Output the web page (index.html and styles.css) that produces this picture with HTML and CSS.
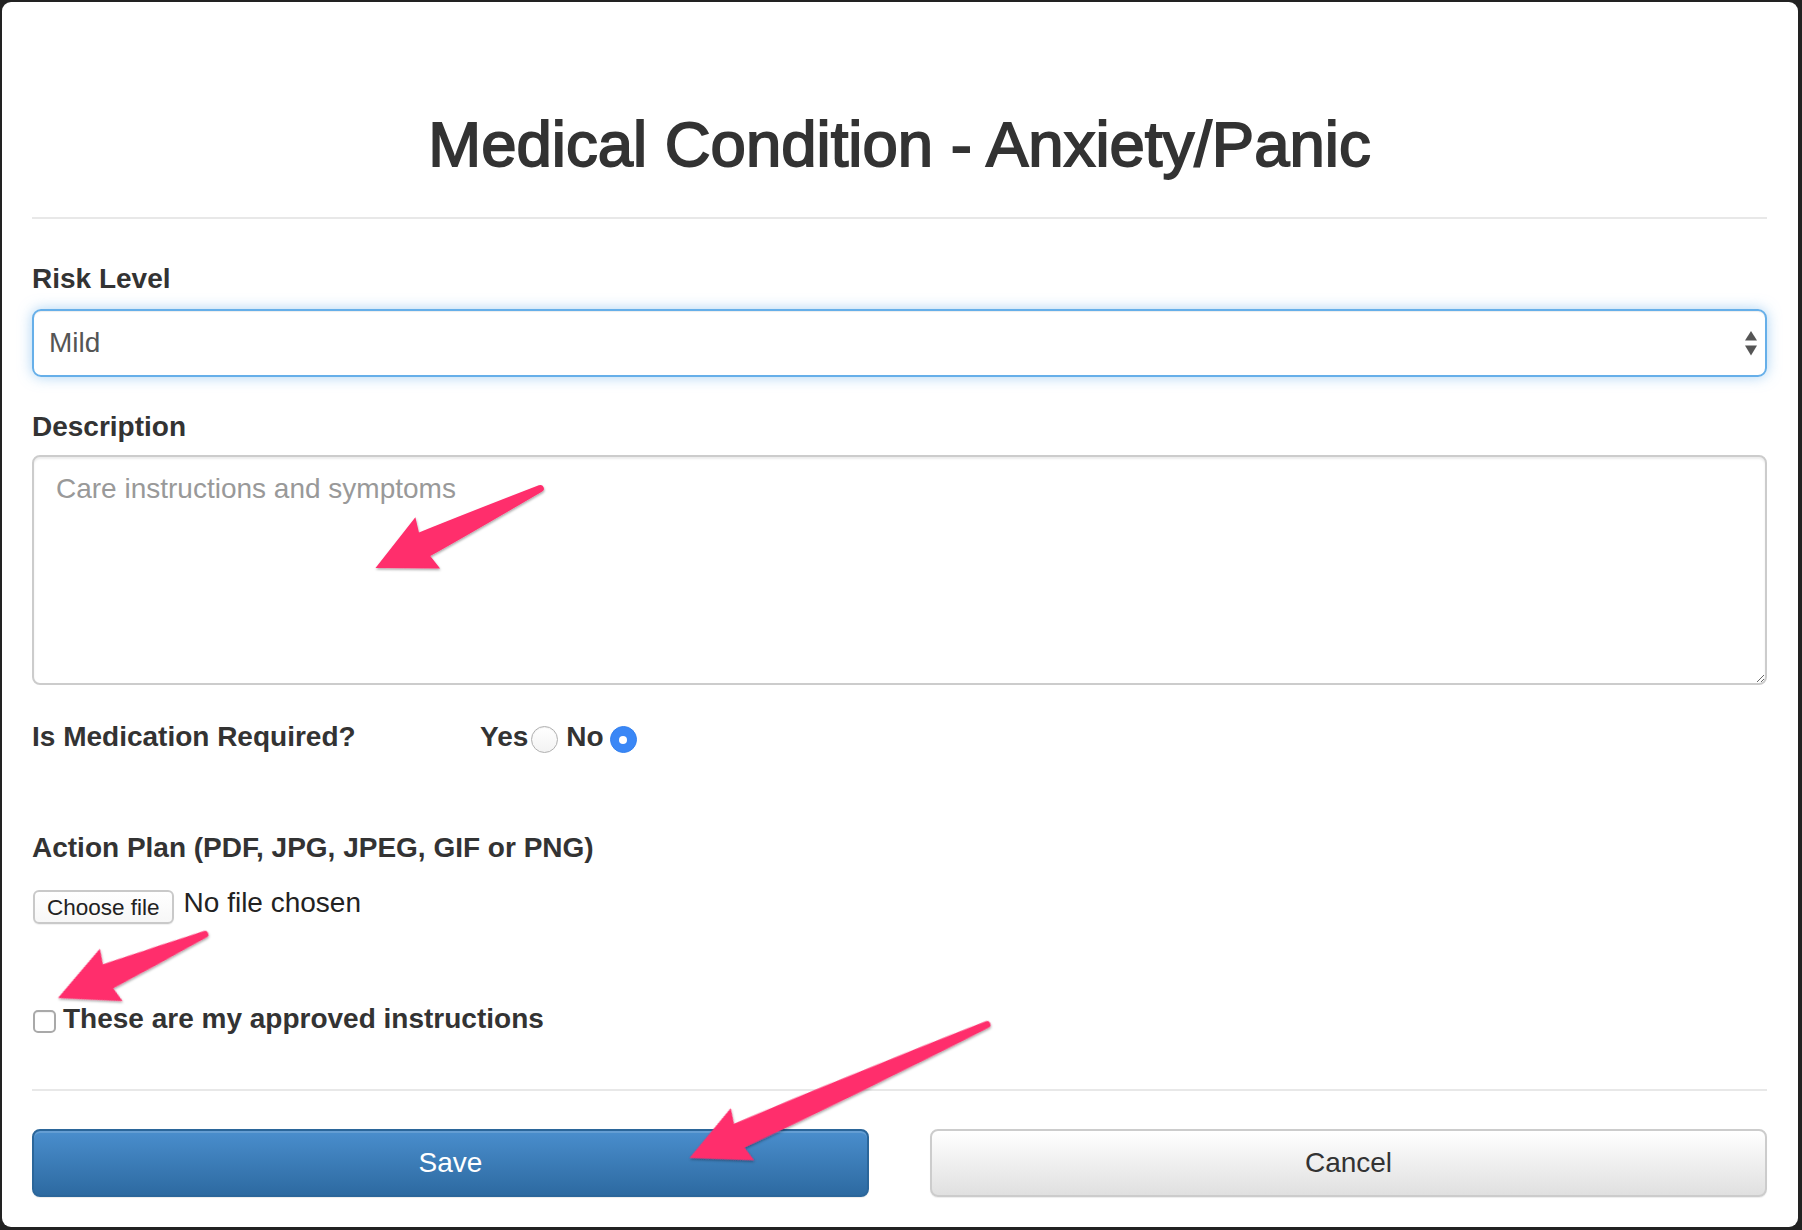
FILE: index.html
```html
<!DOCTYPE html>
<html lang="en">
<head>
<meta charset="utf-8">
<title>Medical Condition - Anxiety/Panic</title>
<link rel="stylesheet" href="styles.css">
</head>
<body>
<div class="modal">
  <h1 class="title">Medical Condition - Anxiety/Panic</h1>
  <hr class="rule rule-top">

  <label class="label label-risk">Risk Level</label>
  <div class="select">
    <span class="select-value">Mild</span>
    <svg class="select-arrows" width="12" height="25" viewBox="0 0 12 25">
      <polygon points="6,0 12,9.5 0,9.5" fill="#555"/>
      <polygon points="0,14.5 12,14.5 6,24.5" fill="#555"/>
    </svg>
  </div>

  <label class="label label-desc">Description</label>
  <textarea class="textarea" placeholder="Care instructions and symptoms"></textarea>

  <div class="radio-row">
    <span class="label label-med">Is Medication Required?</span>
    <span class="label opt-yes">Yes</span>
    <span class="radio radio-off"></span>
    <span class="label opt-no">No</span>
    <span class="radio radio-on"><span class="radio-dot"></span></span>
  </div>

  <label class="label label-plan">Action Plan (PDF, JPG, JPEG, GIF or PNG)</label>
  <div class="file-row">
    <span class="file-btn">Choose file</span>
    <span class="file-name">No file chosen</span>
  </div>

  <div class="check-row">
    <span class="checkbox"></span>
    <span class="label check-label">These are my approved instructions</span>
  </div>

  <hr class="rule rule-bottom">

  <div class="actions">
    <button class="btn btn-primary" type="button">Save</button>
    <button class="btn btn-default" type="button">Cancel</button>
  </div>
</div>

<svg class="arrows" width="1802" height="1230" viewBox="0 0 1802 1230">
  <defs>
    <filter id="shadow" x="-20%" y="-40%" width="140%" height="180%">
      <feDropShadow dx="0.5" dy="1.5" stdDeviation="1.2" flood-color="#000" flood-opacity="0.35"/>
    </filter>
  </defs>
  <g fill="#ff2d6c" filter="url(#shadow)">
    <path transform="translate(375.5 568) rotate(-25.74)"
          d="M0,0 L58,-28.5 L54.5,-13 Q102,-10 183,-3.5 A3.5,3.5 0 0 1 183,3.5 Q102,10 54.5,13 L58,28.5 Z"/>
    <path transform="translate(58 998) rotate(-23.43)"
          d="M0,0 L58,-28.5 L54.5,-13 Q90,-10 160,-3.5 A3.5,3.5 0 0 1 160,3.5 Q90,10 54.5,13 L58,28.5 Z"/>
    <path transform="translate(689.5 1158) rotate(-24.16)"
          d="M0,0 L58,-28.5 L54.5,-13 Q180,-10.5 326,-3.5 A3.5,3.5 0 0 1 326,3.5 Q180,10.5 54.5,13 L58,28.5 Z"/>
  </g>
</svg>
</body>
</html>
```

FILE: styles.css
```css
html, body {
  margin: 0;
  padding: 0;
}

body {
  width: 1802px;
  height: 1230px;
  background: #222222;
  font-family: "Liberation Sans", Arial, sans-serif;
  color: #333333;
  position: relative;
  overflow: hidden;
}

.modal {
  box-sizing: border-box;
  width: 1796px;
  margin: 0 0 0 2px;
  position: relative;
  top: 2px;
  padding: 111px 31px 30px 30px;
  background: #ffffff;
  border-radius: 9px;
}

.title {
  margin: 0;
  font-size: 63.5px;
  line-height: 63px;
  font-weight: 400;
  text-align: center;
  color: #333333;
  -webkit-text-stroke: 1.8px #333333;
}

.rule {
  border: 0;
  height: 2px;
  background: #e8e8e8;
  margin: 0;
}

.rule-top {
  margin-top: 41px;
}

.rule-bottom {
  margin-top: 56px;
}

.label {
  display: block;
  font-size: 28px;
  line-height: 28px;
  font-weight: 700;
  color: #333333;
  white-space: nowrap;
}

.label-risk {
  margin-top: 46px;
}

.select {
  box-sizing: border-box;
  margin-top: 16px;
  height: 68px;
  border: 2px solid #66afe9;
  border-radius: 9px;
  box-shadow: inset 0 1px 1px rgba(0, 0, 0, 0.075), 0 0 14px rgba(102, 175, 233, 0.55);
  display: flex;
  align-items: center;
  justify-content: space-between;
  padding: 0 8px 0 15px;
}

.select-value {
  font-size: 28px;
  line-height: 28px;
  color: #555555;
}

.select-arrows {
  display: block;
}

.label-desc {
  margin-top: 36px;
}

.textarea {
  display: block;
  box-sizing: border-box;
  width: 100%;
  height: 230px;
  margin: 14px 0 0;
  padding: 12px 22px;
  border: 2px solid #cccccc;
  border-radius: 8px;
  box-shadow: inset 0 2px 2px rgba(0, 0, 0, 0.075);
  font-family: "Liberation Sans", Arial, sans-serif;
  font-size: 28px;
  line-height: 40px;
  color: #555555;
  background: #ffffff;
  outline: none;
}

.textarea::placeholder {
  color: #999999;
}

.radio-row {
  margin-top: 38px;
  display: flex;
  align-items: center;
  height: 28px;
}

.label-med {
  width: 448px;
}

.opt-yes,
.opt-no {
  display: inline-block;
}

.radio {
  box-sizing: border-box;
  width: 27px;
  height: 27px;
  border-radius: 50%;
  margin-top: 5px;
  display: flex;
  align-items: center;
  justify-content: center;
}

.radio-off {
  margin-left: 3px;
  margin-right: 8px;
  border: 1.5px solid #b0b0b0;
  background: linear-gradient(#ffffff, #f3f3f3);
  box-shadow: inset 0 1px 1px rgba(0, 0, 0, 0.06);
}

.radio-on {
  margin-left: 6px;
  background: #3a87f6;
  border: 1px solid #3380ee;
}

.radio-dot {
  width: 8px;
  height: 8px;
  border-radius: 50%;
  background: #ffffff;
}

.label-plan {
  margin-top: 83px;
}

.file-row {
  margin-top: 27px;
  display: flex;
  align-items: flex-start;
  height: 34px;
}

.file-btn {
  box-sizing: border-box;
  display: block;
  margin: 1px 0 0 1px;
  height: 34px;
  padding: 4px 12px 3px;
  border: 2px solid #c9c9c9;
  border-radius: 6px;
  background: linear-gradient(#ffffff, #f7f7f7);
  box-shadow: 0 1px 1px rgba(0, 0, 0, 0.06);
  font-size: 22.5px;
  line-height: 23px;
  color: #222222;
  white-space: nowrap;
}

.file-name {
  margin-left: 10px;
  font-size: 28px;
  line-height: 28px;
  color: #222222;
  white-space: nowrap;
}

.check-row {
  margin-top: 82px;
  display: flex;
  align-items: flex-start;
  height: 28px;
}

.checkbox {
  box-sizing: border-box;
  width: 23px;
  height: 23px;
  margin: 5px 7px 0 1px;
  border: 2px solid #a9a9a9;
  border-radius: 5px;
  background: #ffffff;
  box-shadow: inset 0 1px 1px rgba(0, 0, 0, 0.05);
}

.actions {
  margin-top: 38px;
  display: grid;
  grid-template-columns: 1fr 1fr;
  column-gap: 61px;
}

.btn {
  box-sizing: border-box;
  height: 68px;
  border-radius: 8px;
  font-family: "Liberation Sans", Arial, sans-serif;
  font-size: 28px;
  line-height: 28px;
  padding: 0;
  cursor: pointer;
}

.btn-primary {
  color: #ffffff;
  border: 2px solid #2b669a;
  background: linear-gradient(#4a8ecd, #2d6aa1);
  box-shadow: inset 0 2px 0 rgba(255, 255, 255, 0.15), 0 1px 1px rgba(0, 0, 0, 0.075);
}

.btn-default {
  color: #333333;
  border: 2px solid #cccccc;
  background: linear-gradient(#ffffff, #e0e0e0);
  box-shadow: inset 0 2px 0 rgba(255, 255, 255, 0.15), 0 1px 1px rgba(0, 0, 0, 0.075);
}

.arrows {
  position: absolute;
  left: 0;
  top: 0;
  pointer-events: none;
}
```
